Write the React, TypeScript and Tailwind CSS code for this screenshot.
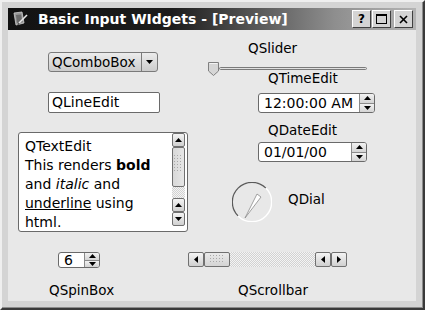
import React from "react";

const Tri = ({ dir, className = "" }: { dir: "up" | "down" | "left" | "right"; className?: string }) => {
  const pts: Record<string, string> = {
    up: "0,4 3.5,0 7,4",
    down: "0,0 7,0 3.5,4",
    left: "4,0 4,7 0,3.5",
    right: "0,0 0,7 4,3.5",
  };
  const vert = dir === "up" || dir === "down";
  return (
    <svg width={vert ? 7 : 4} height={vert ? 4 : 7} className={className}>
      <polygon points={pts[dir]} fill="#000" />
    </svg>
  );
};

const Grip = ({ cols, rows }: { cols: number; rows: number }) => (
  <svg width={cols * 3} height={rows * 3}>
    {Array.from({ length: rows }).map((_, r) =>
      Array.from({ length: cols }).map((_, c) => (
        <rect key={`${r}-${c}`} x={c * 3} y={r * 3} width={1} height={1} fill="#a8a8a8" />
      ))
    )}
  </svg>
);

const SpinButtons = ({ h }: { h: string }) => (
  <div className={`flex flex-col w-[15px] ${h} border-l border-[#8a8a8a]`}>
    <div className="flex-1 flex items-center justify-center bg-gradient-to-b from-[#f2f2f2] to-[#d4d4d4] border-b border-[#8a8a8a]">
      <Tri dir="up" />
    </div>
    <div className="flex-1 flex items-center justify-center bg-gradient-to-b from-[#f2f2f2] to-[#d4d4d4]">
      <Tri dir="down" />
    </div>
  </div>
);

const SpinBox = ({ text, w, cls = "" }: { text: string; w: string; cls?: string }) => (
  <div className={`flex ${w} h-[20px] border border-[#6a6a6a] rounded-[3px] bg-white overflow-hidden ${cls}`}>
    <div className="flex-1 pl-[5px] text-[14px] leading-[18px] text-black">{text}</div>
    <SpinButtons h="h-[18px]" />
  </div>
);

const VBtn = ({ dir }: { dir: "up" | "down" }) => (
  <div className="w-[13px] h-[14px] border border-[#707070] rounded-[2px] bg-gradient-to-b from-[#f4f4f4] to-[#d0d0d0] flex items-center justify-center">
    <Tri dir={dir} />
  </div>
);

const HBtn = ({ dir }: { dir: "left" | "right" }) => (
  <div className="w-[16px] h-[15px] border border-[#707070] rounded-[2px] bg-gradient-to-b from-[#f4f4f4] to-[#d0d0d0] flex items-center justify-center">
    <Tri dir={dir} />
  </div>
);

const TitleBtn = ({ children, cls = "" }: { children: React.ReactNode; cls?: string }) => (
  <div
    className={`w-[19px] h-[18px] bg-[#d4d4d4] border-t border-l border-[#ffffff] border-r border-b border-r-[#404040] border-b-[#404040] flex items-center justify-center text-black ${cls}`}
  >
    {children}
  </div>
);

const Label = ({ children, cls = "" }: { children: React.ReactNode; cls?: string }) => (
  <div className={`text-[13.5px] leading-[16px] text-black whitespace-nowrap ${cls}`}>{children}</div>
);

export default function App() {
  return (
    <div className="w-[425px] h-[310px] font-['DejaVu_Sans',sans-serif] bg-[#d4d4d4] border-t-2 border-l-2 border-[#efefef] border-r-2 border-b-2 border-r-[#3a3a3a] border-b-[#3a3a3a]">
      <div className="w-full h-full pt-[6px] pl-[6px] pr-[6px] pb-[6px] border-r border-b border-[#8c8c8c] flex flex-col">
        {/* Title bar */}
        <div className="h-[22px] flex items-center bg-[linear-gradient(to_right,#121212_0%,#1c1c1c_40%,#8e8e8e_80%,#b4b4b4_100%)]">
          <svg width="15" height="16" className="ml-[5px]" viewBox="0 0 15 16">
            <polygon points="1,2 9,1 11,12 3,14" fill="#9a9a9a" stroke="#d0d0d0" strokeWidth="0.8" />
            <polygon points="3,4 8,3.5 9.5,11 4,12" fill="#6c6c6c" />
            <line x1="6" y1="12" x2="14" y2="4" stroke="#e8e8e8" strokeWidth="1.6" />
            <line x1="6" y1="12" x2="5" y2="14" stroke="#555" strokeWidth="1.4" />
          </svg>
          <div className="ml-[10px] text-white font-bold text-[14px] leading-[22px] whitespace-nowrap">
            Basic Input WIdgets - [Preview]
          </div>
          <div className="ml-auto flex items-center mr-[3px]">
            <TitleBtn cls="text-[12px] font-bold">?</TitleBtn>
            <TitleBtn cls="ml-[1px]">
              <div className="w-[11px] h-[10px] border border-black border-t-2"></div>
            </TitleBtn>
            <TitleBtn cls="ml-[3px]">
              <svg width="9" height="9">
                <line x1="1" y1="1" x2="8" y2="8" stroke="#000" strokeWidth="1.6" />
                <line x1="8" y1="1" x2="1" y2="8" stroke="#000" strokeWidth="1.6" />
              </svg>
            </TitleBtn>
          </div>
        </div>

        {/* Content */}
        <div className="flex-1 bg-[#e8e8e8] flex">
          {/* Left column */}
          <div className="w-[180px] flex flex-col items-start">
            <div className="mt-[22px] ml-[40px] w-[110px] h-[20px] flex border border-[#7a7a7a] rounded-[3px] bg-gradient-to-b from-[#ececec] to-[#cccccc] overflow-hidden">
              <div className="flex-1 pl-[3px] text-[13.5px] leading-[18px] text-black">QComboBox</div>
              <div className="w-[16px] border-l border-[#7a7a7a] flex items-center justify-center">
                <Tri dir="down" />
              </div>
            </div>

            <div className="mt-[20px] ml-[40px] w-[112px] h-[21px] border border-[#6a6a6a] rounded-[2px] bg-white pl-[3px] text-[14px] leading-[19px] text-black">
              QLineEdit
            </div>

            <div className="mt-[19px] ml-[10px] w-[170px] h-[100px] border border-[#6a6a6a] rounded-[3px] bg-white flex">
              <div className="flex-1 pl-[6px] pt-[4px] text-[14px] leading-[19px] text-black whitespace-nowrap">
                <div>QTextEdit</div>
                <div>
                  This renders <b>bold</b>
                </div>
                <div>
                  and <i>italic</i> and
                </div>
                <div>
                  <u>underline</u> using
                </div>
                <div>html.</div>
              </div>
              <div className="flex flex-col mr-[2px] mt-[0px] w-[13px]">
                <VBtn dir="up" />
                <div className="w-[13px] h-[40px] border border-[#707070] rounded-[2px] bg-gradient-to-r from-[#d8d8d8] to-[#e6e6e6] flex justify-center pt-[7px]">
                  <Grip cols={3} rows={6} />
                </div>
                <div className="h-[11px] bg-[repeating-conic-gradient(#d2d2d2_0%_25%,#f4f4f4_0%_50%)] bg-[length:2px_2px]"></div>
                <VBtn dir="up" />
                <VBtn dir="down" />
              </div>
            </div>

            <div className="mt-[20px] ml-[50px] w-[42px] h-[16px] flex border border-[#6a6a6a] rounded-[3px] bg-white overflow-hidden">
              <div className="flex-1 pl-[5px] text-[14px] leading-[14px] text-black">6</div>
              <SpinButtons h="h-[14px]" />
            </div>

            <Label cls="mt-[14px] ml-[41px]">QSpinBox</Label>
          </div>

          {/* Right column */}
          <div className="flex-1 flex flex-col items-start">
            <Label cls="mt-[10px] ml-[60px]">QSlider</Label>

            <div className="mt-[6px] ml-[20px] w-[159px] h-[13px] flex items-center">
              <svg width="12" height="14" className="shrink-0">
                <path d="M0.5,0.5 H10.5 V9 L5.5,13.5 L0.5,9 Z" fill="#d6d6d6" stroke="#808080" />
                <path d="M1.5,1.5 H9.5" stroke="#f4f4f4" />
              </svg>
              <div className="flex-1 h-[3px] border border-[#7a7a7a] rounded-[2px] bg-[#e0e0e0] -ml-[1px]"></div>
            </div>

            <Label cls="-mt-[5px] ml-[80px]">QTimeEdit</Label>
            <SpinBox text="12:00:00 AM" w="w-[117px]" cls="mt-[7px] ml-[70px]" />

            <Label cls="mt-[9px] ml-[80px]">QDateEdit</Label>
            <SpinBox text="01/01/00" w="w-[109px]" cls="mt-[4px] ml-[70px]" />

            <div className="mt-[20px] ml-[44px] flex items-start">
              <svg width="40" height="40" viewBox="0 0 40 40">
                <path d="M33.9,6.1 A19.5,19.5 0 0 0 6.1,33.9" fill="none" stroke="#5a5a5a" strokeWidth="1.2" />
                <path d="M6.1,33.9 A19.5,19.5 0 0 0 33.9,6.1" fill="none" stroke="#ffffff" strokeWidth="1.4" />
                <polygon points="13,36 25,12 29,15" fill="#ffffff" stroke="#8a8a8a" strokeWidth="0.8" />
              </svg>
              <Label cls="mt-[9px] ml-[16px]">QDial</Label>
            </div>

            <div className="mt-[30px] w-[159px] h-[15px] flex">
              <HBtn dir="left" />
              <div className="w-[26px] h-[15px] border border-[#707070] rounded-[2px] bg-gradient-to-b from-[#eaeaea] to-[#d4d4d4] flex items-center justify-center">
                <Grip cols={5} rows={3} />
              </div>
              <div className="flex-1 bg-[repeating-conic-gradient(#d2d2d2_0%_25%,#f4f4f4_0%_50%)] bg-[length:2px_2px]"></div>
              <HBtn dir="left" />
              <HBtn dir="right" />
            </div>

            <Label cls="mt-[15px] ml-[50px]">QScrollbar</Label>
          </div>
        </div>
      </div>
    </div>
  );
}
